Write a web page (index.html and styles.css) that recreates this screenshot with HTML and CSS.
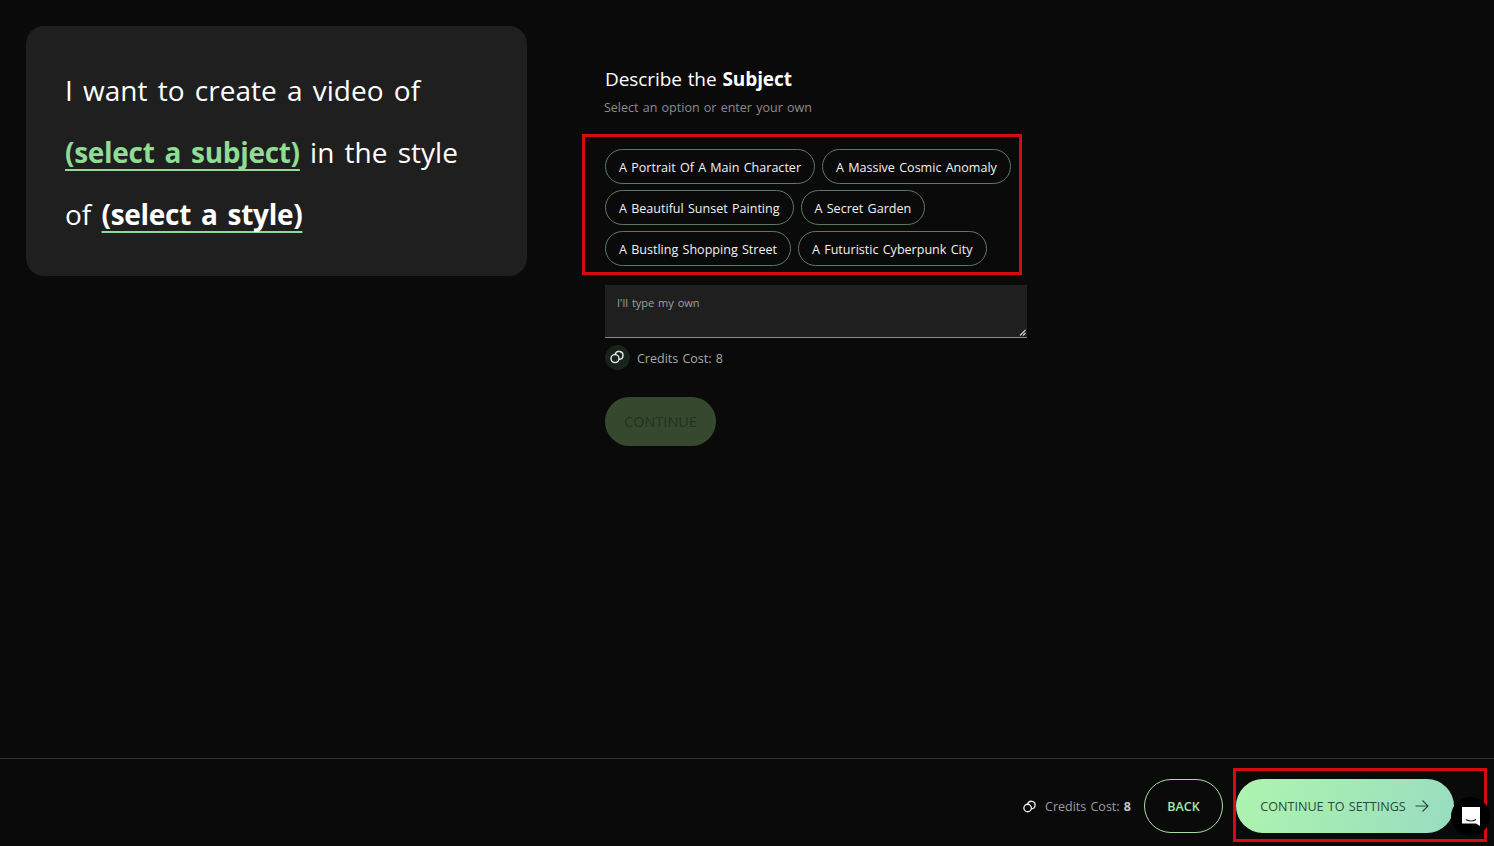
FILE: index.html
```html
<!DOCTYPE html>
<html lang="en">
<head>
<meta charset="utf-8">
<title>Describe the Subject</title>
<link rel="stylesheet" href="styles.css">
</head>
<body>
<div class="page">
  <main class="main">
    <section class="prompt-card">
      <div class="prompt-line">I want to create a video of</div>
      <div class="prompt-line"><span class="pick pick-green">(select a subject)</span> in the style</div>
      <div class="prompt-line">of <span class="pick pick-white">(select a style)</span></div>
    </section>
    <section class="form">
      <h1 class="title">Describe the <b>Subject</b></h1>
      <p class="subtitle">Select an option or enter your own</p>
      <div class="chips">
        <span class="annotation annotation-chips"></span>
        <div class="chip-row"><span class="chip">A Portrait Of A Main Character</span><span class="chip">A Massive Cosmic Anomaly</span></div>
        <div class="chip-row"><span class="chip">A Beautiful Sunset Painting</span><span class="chip">A Secret Garden</span></div>
        <div class="chip-row"><span class="chip">A Bustling Shopping Street</span><span class="chip">A Futuristic Cyberpunk City</span></div>
      </div>
      <div class="textarea">
        <span class="placeholder">I'll type my own</span>
        <svg class="resize" width="7" height="7" viewBox="0 0 7 7"><path d="M1 6.5 6.5 1M4 6.5 6.5 4" stroke="#cfcfcf" stroke-width="1.2" fill="none"/></svg>
      </div>
      <div class="cost">
        <span class="cost-icon"><svg width="16" height="16" viewBox="0 0 16 16" fill="none" stroke="#ececec" stroke-width="1.4"><circle cx="6" cy="9.6" r="4"/><path d="M6.08 5.6A4 4 0 1 1 9.92 10.4"/></svg></span>
        <span class="cost-text">Credits Cost: 8</span>
      </div>
      <button class="continue" type="button">CONTINUE</button>
    </section>
  </main>
  <footer class="footer">
    <div class="footer-cost">
      <svg width="15" height="15" viewBox="0 0 16 16" fill="none" stroke="#ececec" stroke-width="1.4"><circle cx="6" cy="9.6" r="4"/><path d="M6.08 5.6A4 4 0 1 1 9.92 10.4"/></svg>
      <span>Credits Cost: <b>8</b></span>
    </div>
    <button class="back" type="button">BACK</button>
    <button class="next" type="button">
      <span>CONTINUE TO SETTINGS</span>
      <svg width="16" height="14" viewBox="0 0 16 14" fill="none" stroke="#2c4a3c" stroke-width="1.1"><path d="M1.5 7h12.5M8.5 1.5 14 7 8.5 12.5"/></svg>
      <span class="annotation annotation-next"></span>
    </button>
    <div class="chat">
      <svg width="18" height="19" viewBox="0 0 18 19"><path d="M0 0h18v19l-4-2.500H0z" fill="#fff"/><path d="M4 12.500c3 1.800 7 1.800 10 0" stroke="#222" stroke-width="1.2" fill="none"/></svg>
    </div>
  </footer>
</div>
</body>
</html>
```
FILE: styles.css
```css
* { box-sizing: border-box; }
html, body { margin: 0; height: 100%; }
body {
  background: #0a0a0b;
  color: #fff;
  font-family: "Open Sans", "Noto Sans", sans-serif;
  overflow: hidden;
}
.page { height: 846px; display: flex; flex-direction: column; }
.main { flex: 1; display: flex; align-items: flex-start; padding: 26px 0 0 26px; gap: 78px; }

.prompt-card {
  width: 501px;
  height: 250px;
  padding: 33px 39px;
  background: #1f1f1f;
  border-radius: 18px;
}
.prompt-line { font-size: 28px; line-height: 62px; word-spacing: 3px; color: #fff; white-space: nowrap; }
.pick {
  font-weight: 700;
  letter-spacing: -0.3px;
  text-decoration: underline #8fdc95 2px;
  text-decoration-skip-ink: none;
  text-underline-offset: 6px;
}
.pick-green { color: #8fdc95; }
.pick-white { color: #fff; }

.form { width: 422px; padding-top: 40px; }
.title { margin: 0; font-size: 19px; line-height: 26px; font-weight: 400; word-spacing: 1px; letter-spacing: -0.08px; }
.title b { font-weight: 700; }
.subtitle { margin: 6px 0 0 -1px; font-size: 12.5px; line-height: 20px; color: #8b8b8b; word-spacing: 1px; }

.chips { position: relative; margin-top: 31px; display: flex; flex-direction: column; gap: 6px; }
.chip-row { display: flex; gap: 7px; }
.chip {
  height: 35px;
  display: flex;
  align-items: center;
  padding: 1px 13px 0;
  border: 1px solid #5c7a60;
  border-radius: 18px;
  font-size: 12.55px;
  word-spacing: 1px;
  white-space: nowrap;
  color: #f2f2f2;
}
.annotation { position: absolute; border: 3px solid #d50b0f; pointer-events: none; }
.annotation-chips { left: -23px; top: -15px; width: 440px; height: 141px; }
.annotation-next { left: -3px; top: -11px; width: 254px; height: 74px; }

.textarea {
  position: relative;
  margin-top: 19px;
  height: 53px;
  padding: 9px 12px;
  background: #1f1f1f;
  border-bottom: 1px solid #8a8a8a;
}
.placeholder { font-size: 11px; line-height: 18px; color: #a0a0a0; display: block; word-spacing: 1px; }
.resize { position: absolute; right: 1px; bottom: 1px; }

.cost { margin-top: 7px; display: flex; align-items: center; gap: 7px; font-size: 12.5px; color: #a9a9a9; word-spacing: 1px; }
.cost-text { padding-top: 1px; }
.cost-icon { width: 25px; height: 25px; border-radius: 50%; background: #17241b; display: flex; align-items: center; justify-content: center; padding: 0 1px 2px 0; }

.continue {
  display: block;
  margin-top: 27px;
  width: 111px;
  height: 49px;
  border: 0;
  border-radius: 25px;
  background: #36492f;
  color: #22321f;
  font: 400 14.5px "Open Sans", sans-serif;
  padding: 0;
}

.footer {
  position: relative;
  height: 88px;
  flex: none;
  border-top: 1px solid #34343f;
  display: flex;
  justify-content: flex-end;
  align-items: flex-start;
  padding: 20px 40px 0 0;
}
.footer-cost { height: 54px; display: flex; align-items: center; gap: 8px; margin-right: 13px; font-size: 12.5px; color: #9b9ba5; word-spacing: 1px; }
.footer-cost b { color: #c4c4c4; }
.back {
  width: 79px;
  height: 54px;
  margin-right: 13px;
  border: 1px solid #a5dfa0;
  border-radius: 27px;
  background: transparent;
  color: #a5e8a5;
  font: 600 12.5px "Open Sans", sans-serif;
  padding: 0;
}
.next {
  position: relative;
  width: 218px;
  height: 54px;
  border: 0;
  border-radius: 27px;
  background: linear-gradient(115deg, #aff5ae 0%, #97dcc0 100%);
  color: #2c4a3c;
  font: 400 12.6px "Open Sans", sans-serif;
  word-spacing: 1px;
  display: flex;
  align-items: center;
  justify-content: center;
  gap: 8px;
  padding: 0;
}
.chat {
  position: absolute;
  left: 1451px;
  top: 38px;
  width: 39px;
  height: 39px;
  border-radius: 50%;
  background: #000;
  display: flex;
  align-items: center;
  justify-content: center;
}
```
